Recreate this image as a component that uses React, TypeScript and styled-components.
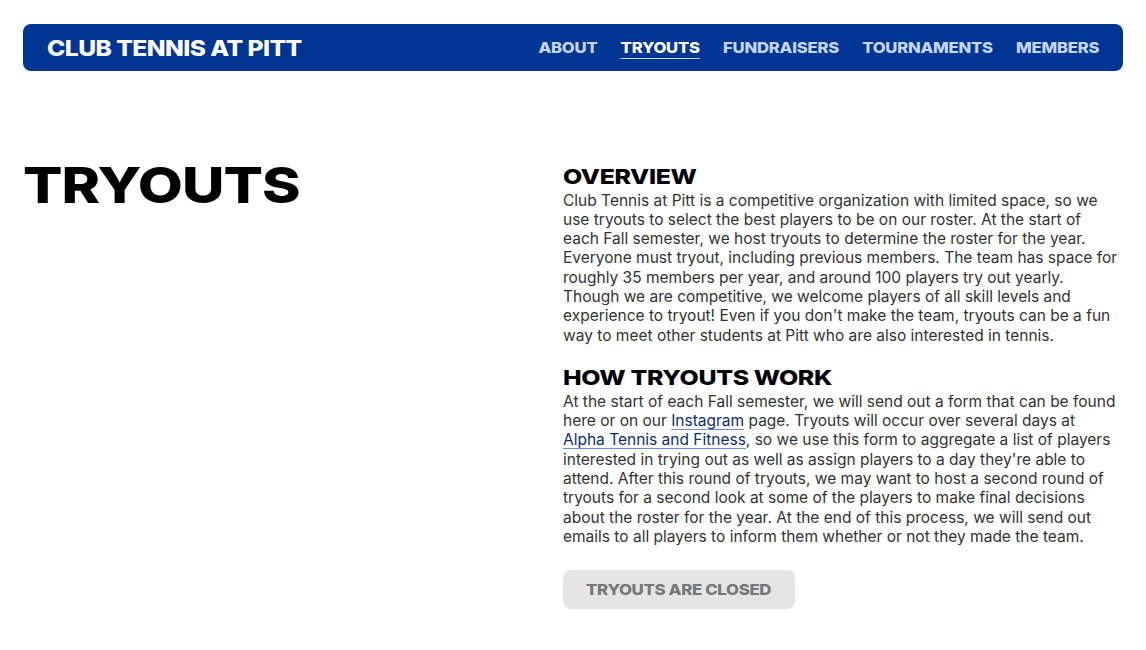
import React from "react";
import styled, { createGlobalStyle } from "styled-components";

const Global = createGlobalStyle`
  body { margin: 0; background: #fff; font-family: "Inter", "Liberation Sans", sans-serif; }
  * { box-sizing: border-box; }
`;

const display = `"Inter", "Liberation Sans", sans-serif`;

/* the reference uses an extended grotesk; Inter is widened horizontally */
const Wide = styled.span<{ $s?: number; $origin?: string }>`
  display: inline-block;
  transform: scaleX(${(p) => p.$s ?? 1.12});
  transform-origin: ${(p) => p.$origin ?? "left"} center;
  white-space: nowrap;
`;

const Page = styled.div`
  padding: 24px 23px 40px;
`;

const Nav = styled.nav`
  height: 47px;
  background: #003594;
  border-radius: 8px;
  display: flex;
  align-items: center;
  justify-content: space-between;
  padding: 0 24px;
`;

const Brand = styled.div`
  font-family: ${display};
  font-weight: 800;
  font-size: 22px;
  letter-spacing: -0.5px;
  color: #fff;
  line-height: 1;
`;

const Links = styled.div`
  display: flex;
  gap: 20.9px;
  align-items: center;
  transform: scaleX(1.11);
  transform-origin: right center;
`;

const NavLink = styled.a<{ $active?: boolean }>`
  font-family: ${display};
  font-weight: 800;
  font-size: 15px;
  letter-spacing: -0.2px;
  line-height: 1;
  color: ${(p) => (p.$active ? "#fff" : "#c6d6fb")};
  text-decoration: ${(p) => (p.$active ? "underline" : "none")};
  text-decoration-color: #c6d6fb;
  text-decoration-thickness: 1px;
  text-underline-offset: 5px;
`;

const Main = styled.main`
  display: grid;
  grid-template-columns: 540px 560px;
  margin-top: 91.5px;
`;

const Title = styled.h1`
  margin: -1.3px 0 0;
  font-family: ${display};
  font-weight: 800;
  font-size: 49.5px;
  letter-spacing: -0.8px;
  line-height: 1;
  color: #000;
`;

const Content = styled.div`
  display: flex;
  flex-direction: column;
`;

const Heading = styled.h2`
  margin: 0;
  font-family: ${display};
  font-weight: 800;
  font-size: 20.6px;
  letter-spacing: -0.3px;
  line-height: 28px;
  color: #000;
`;

const Para = styled.p`
  margin: 0 0 19px;
  font-family: "Inter", sans-serif;
  font-size: 15.5px;
  line-height: 19.3px;
  color: #333;
  white-space: nowrap;
`;

const TextLink = styled.a`
  color: #0b2d7a;
  text-decoration: underline;
  text-decoration-color: #6d8fdb;
  text-decoration-thickness: 1px;
  text-underline-offset: 3px;
`;

const Closed = styled.button`
  align-self: flex-start;
  margin-top: 4.5px;
  width: 232px;
  height: 39px;
  border: none;
  border-radius: 8px;
  background: #e5e5e5;
  color: #777;
  font-family: ${display};
  font-weight: 800;
  font-size: 15px;
  letter-spacing: -0.3px;
  padding: 0;
`;

export default function App() {
  return (
    <Page>
      <Global />
      <Nav>
        <Brand>
          <Wide>CLUB TENNIS AT PITT</Wide>
        </Brand>
        <Links>
          <NavLink>ABOUT</NavLink>
          <NavLink $active>TRYOUTS</NavLink>
          <NavLink>FUNDRAISERS</NavLink>
          <NavLink>TOURNAMENTS</NavLink>
          <NavLink>MEMBERS</NavLink>
        </Links>
      </Nav>
      <Main>
        <Title>
          <Wide $s={1.18}>TRYOUTS</Wide>
        </Title>
        <Content>
          <Heading>
            <Wide $s={1.21}>OVERVIEW</Wide>
          </Heading>
          <Para>
            Club Tennis at Pitt is a competitive organization with limited space, so we
            <br />
            use tryouts to select the best players to be on our roster. At the start of
            <br />
            each Fall semester, we host tryouts to determine the roster for the year.
            <br />
            Everyone must tryout, including previous members. The team has space for
            <br />
            roughly 35 members per year, and around 100 players try out yearly.
            <br />
            Though we are competitive, we welcome players of all skill levels and
            <br />
            experience to tryout! Even if you don't make the team, tryouts can be a fun
            <br />
            way to meet other students at Pitt who are also interested in tennis.
          </Para>
          <Heading>
            <Wide $s={1.21}>HOW TRYOUTS WORK</Wide>
          </Heading>
          <Para>
            At the start of each Fall semester, we will send out a form that can be found
            <br />
            here or on our <TextLink>Instagram</TextLink> page. Tryouts will occur over several
            days at
            <br />
            <TextLink>Alpha Tennis and Fitness</TextLink>, so we use this form to aggregate a list
            of players
            <br />
            interested in trying out as well as assign players to a day they're able to
            <br />
            attend. After this round of tryouts, we may want to host a second round of
            <br />
            tryouts for a second look at some of the players to make final decisions
            <br />
            about the roster for the year. At the end of this process, we will send out
            <br />
            emails to all players to inform them whether or not they made the team.
          </Para>
          <Closed>
            <Wide $origin="center">TRYOUTS ARE CLOSED</Wide>
          </Closed>
        </Content>
      </Main>
    </Page>
  );
}
